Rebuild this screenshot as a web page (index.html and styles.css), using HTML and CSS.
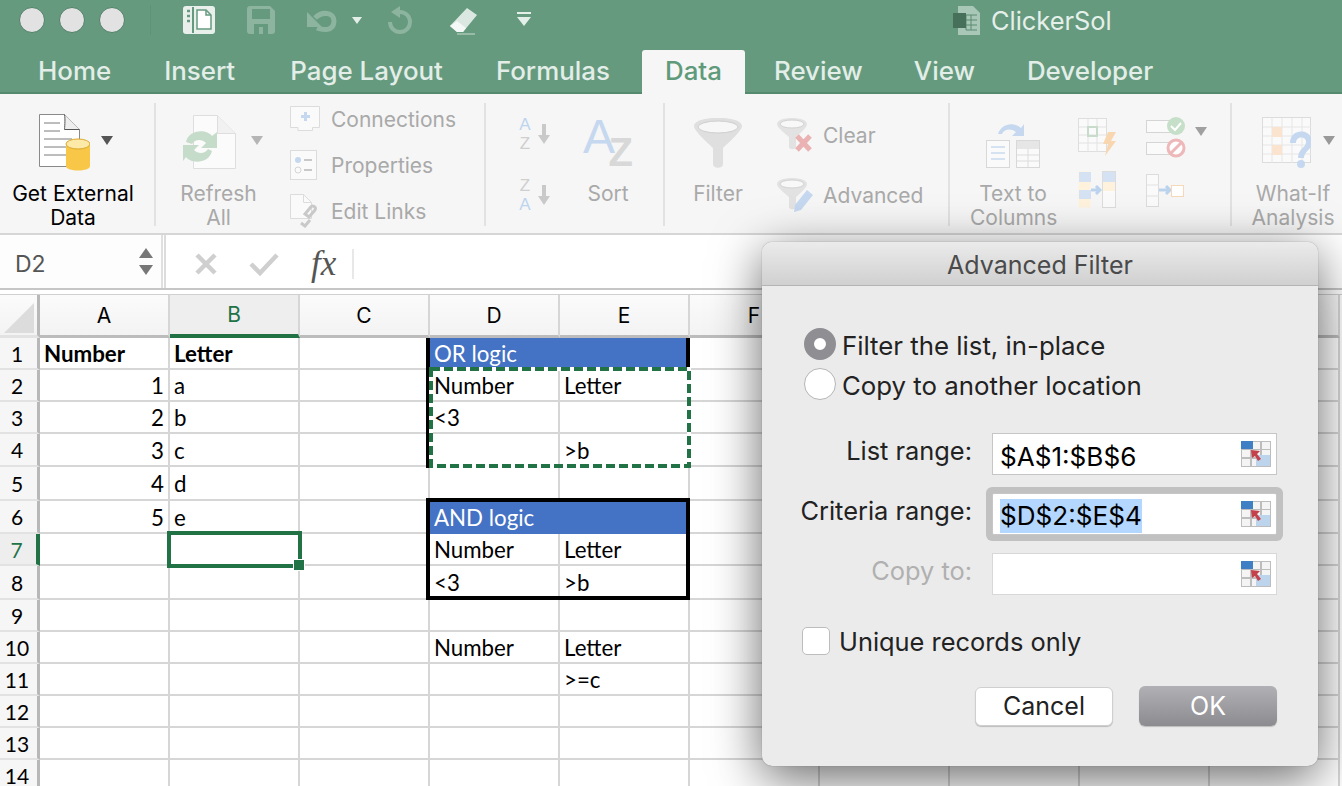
FILE: index.html
```html
<!DOCTYPE html>
<html lang="en">
<head>
    <meta charset="UTF-8">
    <title>ClickerSol</title>
    <link rel="stylesheet" href="styles.css">
</head>
<body>
    <div class="titlebar">
        <div class="lights"><span></span><span></span><span></span></div>
        <div class="qat-sep"></div>
        <svg class="qat q-side" width="32" height="28" viewBox="0 0 32 28"><rect width="32" height="28" rx="3" fill="#e9f0ec"/><path d="M10 1v26" stroke="#659a7e" stroke-width="2"/><path d="M4 5h3M4 10h3M4 15h3" stroke="#659a7e" stroke-width="2.5"/><path d="M14 4h9l5 5v14H14z" fill="#fff" stroke="#659a7e" stroke-width="1.5"/><path d="M23 4v5h5" fill="none" stroke="#659a7e" stroke-width="1.5"/></svg>
        <svg class="qat q-save" width="28" height="28" viewBox="0 0 28 28"><path d="M3 0h20l5 5v20a3 3 0 0 1-3 3H3a3 3 0 0 1-3-3V3a3 3 0 0 1 3-3z" fill="#8db49f"/><rect x="5" y="3" width="18" height="10" fill="#659a7e"/><rect x="7" y="18" width="14" height="10" fill="#659a7e"/><rect x="12" y="21" width="4" height="7" fill="#8db49f"/></svg>
        <svg class="qat q-undo" width="30" height="24" viewBox="0 0 30 24"><path d="M10 19 C15 21 27 23 27 12 C27 3 15 2 8 9" fill="none" stroke="#8db49f" stroke-width="5"/><path d="M0 3v15h15z" fill="#8db49f"/></svg>
        <svg class="qat q-caret" width="10" height="7" viewBox="0 0 10 7"><path d="M0 0h10L5 7z" fill="#e4efe9"/></svg>
        <svg class="qat q-redo" width="25" height="28" viewBox="0 0 25 28"><path d="M13 6a10 10 0 1 1-10 10" fill="none" stroke="#8db49f" stroke-width="4"/><path d="M13 0l-9 6 9 6z" fill="#8db49f"/></svg>
        <svg class="qat q-eraser" width="28" height="28" viewBox="0 0 28 28"><path d="M18 1l10 7-14 17H8L1 19z" fill="#dbe8e1"/><path d="M1 19l7 6h6l3-4-9-7z" fill="#f4f8f6"/><path d="M8 27h18" stroke="#a9c6b6" stroke-width="1.5"/></svg>
        <svg class="qat q-more" width="16" height="14" viewBox="0 0 16 14"><path d="M1 1h14" stroke="#e4efe9" stroke-width="2"/><path d="M1 5h14L8 14z" fill="#e4efe9"/></svg>
        <div class="doc-title">
            <svg width="27" height="29" viewBox="0 0 27 29"><path d="M5 0h15l7 7v22H5z" fill="#a9c7b7"/><path d="M13 9h11M13 14h11M13 19h11M13 24h11M13 9v15M18 9v15" stroke="#5b8a71" stroke-width="1"/><rect y="7" width="13" height="15" fill="#47705b"/></svg>
            <span>ClickerSol</span>
        </div>
    </div>
    <div class="tabs">
        <div class="tab">Home</div>
        <div class="tab">Insert</div>
        <div class="tab">Page Layout</div>
        <div class="tab">Formulas</div>
        <div class="tab active">Data</div>
        <div class="tab">Review</div>
        <div class="tab">View</div>
        <div class="tab">Developer</div>
    </div>

    <div class="ribbon">
        <div class="group g-external">
            <div class="big on b-external">
                <div class="big-icon">
                    <svg width="51" height="57" viewBox="0 0 51 57"><path d="M.5.5h25l15 15v37H.5z" fill="#fff" stroke="#8a8a8a"/><path d="M25.5.5c1 5 0 14 0 15h15" fill="#eee" stroke="#555"/><path d="M5 9h16M5 17h16M5 25h28M5 33h28M5 41h24" stroke="#bdbdbd" stroke-width="2"/><path d="M27 30h24v22c0 6-24 6-24 0z" fill="#f8c748"/><ellipse cx="39" cy="30" rx="12" ry="5" fill="#fde9a8" stroke="#dca92e"/></svg>
                    <i class="caret"></i>
                </div>
                <div class="label">Get External<br>Data</div>
            </div>
        </div>
        <div class="group g-connect">
            <div class="big b-refresh">
                <div class="big-icon">
                    <svg width="53" height="55" viewBox="0 0 53 55"><path d="M10.500.5h24l18 18v35h-42z" fill="#fbfbfb" stroke="#dedede"/><path d="M34.500.5v18h18" fill="#f1f1f1" stroke="#dedede"/><path d="M3 27c3-13 21-13 26-6l5-4v16H18l5-5c-4-4-11-4-14 1z" fill="#c6dccb"/><path d="M29 36c-3 13-21 13-26 6l-3 4V30h16l-5 5c4 4 11 4 14-1z" fill="#c6dccb"/></svg>
                    <i class="caret"></i>
                </div>
                <div class="label">Refresh<br>All</div>
            </div>
            <div class="mini-col">
                <div class="mini">
                    <span class="mini-icon"><svg width="30" height="26" viewBox="0 0 30 26"><path d="M.5.500h29v21h-7v3H8v-3H.5z" fill="#fafafa" stroke="#dcdcdc"/><path d="M11 9h3V6h3v3h3v3h-3v3h-3v-3h-3z" fill="#c5d8ef"/></svg></span>Connections
                </div>
                <div class="mini">
                    <span class="mini-icon"><svg width="27" height="30" viewBox="0 0 27 30"><rect x=".5" y=".5" width="26" height="29" fill="#fafafa" stroke="#dcdcdc"/><circle cx="8" cy="10" r="3" fill="#c5d8ef"/><circle cx="8" cy="20" r="3" fill="none" stroke="#d5d5d5"/><path d="M14 10h8M14 20h8" stroke="#c8c8c8" stroke-width="2"/></svg></span>Properties
                </div>
                <div class="mini">
                    <span class="mini-icon"><svg width="31" height="34" viewBox="0 0 31 34"><path d="M.5.5h13l8 8v16H.5z" fill="#fafafa" stroke="#dcdcdc"/><path d="M13.500.5v8h8" fill="none" stroke="#dcdcdc"/><path d="M11 29l4 3 5-6M20 14l-5 6 4 3 6-7c2-3-3-6-5-2z" fill="none" stroke="#c9c9c9" stroke-width="3"/></svg></span>Edit Links
                </div>
            </div>
        </div>
        <div class="group g-sort">
            <div class="sort-col">
                <div class="sort-mini"><span class="az"><em class="blue">A</em><em>Z</em></span><svg width="12" height="20" viewBox="0 0 12 20"><path d="M4 0h4v11h4l-6 9-6-9h4z" fill="#c9c9c9"/></svg></div>
                <div class="sort-mini"><span class="az"><em>Z</em><em class="blue">A</em></span><svg width="12" height="20" viewBox="0 0 12 20"><path d="M4 0h4v11h4l-6 9-6-9h4z" fill="#c9c9c9"/></svg></div>
            </div>
            <div class="big b-sort">
                <div class="big-icon"><span class="big-az"><b>A</b><b>Z</b></span></div>
                <div class="label">Sort</div>
            </div>
        </div>
        <div class="group g-filter">
            <div class="big b-filter">
                <div class="big-icon">
                    <svg width="48" height="50" viewBox="0 0 48 50"><path d="M0 8c0-11 48-11 48 0 0 5-14 17-19 22v16c0 5-10 5-10 0V30C14 25 0 13 0 8z" fill="#dfdfdf"/><ellipse cx="24" cy="9" rx="20" ry="6" fill="#f7f7f7" stroke="#cfcfcf"/></svg>
                </div>
                <div class="label">Filter</div>
            </div>
            <div class="mini-col tall">
                <div class="mini">
                    <span class="mini-icon"><svg width="36" height="34" viewBox="0 0 36 34"><path d="M0 6c0-8 30-8 30 0 0 4-9 11-11 13v10c0 3-7 3-7 0V19C10 17 0 10 0 6z" fill="#e2e2e2"/><ellipse cx="15" cy="6" rx="12" ry="4" fill="#f8f8f8" stroke="#d2d2d2"/><path d="M20 18l13 14M33 18L20 32" stroke="#eab2b2" stroke-width="5"/></svg></span>Clear
                </div>
                <div class="mini">
                    <span class="mini-icon"><svg width="36" height="34" viewBox="0 0 36 34"><path d="M0 6c0-8 30-8 30 0 0 4-9 11-11 13v10c0 3-7 3-7 0V19C10 17 0 10 0 6z" fill="#e2e2e2"/><ellipse cx="15" cy="6" rx="12" ry="4" fill="#f8f8f8" stroke="#d2d2d2"/><path d="M30 12l6 5-12 15-7 2 1-7z" fill="#c5d8ef"/></svg></span>Advanced
                </div>
            </div>
        </div>
        <div class="group g-tools">
            <div class="big b-text">
                <div class="big-icon">
                    <svg width="55" height="50" viewBox="0 0 55 50"><path d="M12 16c3-10 15-13 23-6l3-4v12H26l4-4c-5-4-12-3-14 2z" fill="#c5d8ef"/><rect x=".5" y="22.500" width="23" height="27" fill="#fafafa" stroke="#d8d8d8"/><path d="M5 29h14M5 35h14M5 41h14" stroke="#d5e2f2" stroke-width="2"/><rect x="30.500" y="22.500" width="23" height="27" fill="#fafafa" stroke="#d8d8d8"/><rect x="31" y="23" width="22" height="8" fill="#e6e6e6"/><path d="M42 31v18M31 37h22M31 43h22" stroke="#dcdcdc"/></svg>
                </div>
                <div class="label">Text to<br>Columns</div>
            </div>
            <div class="tool-grid">
                <svg width="39" height="38" viewBox="0 0 39 38"><rect x=".5" y=".5" width="28" height="33" fill="#fafafa" stroke="#dedede"/><path d="M10 1v33M19 1v33M1 9h28M1 17h28M1 25h28" stroke="#e2e2e2"/><rect x="10" y="9" width="9" height="9" fill="none" stroke="#c8dccb" stroke-width="2"/><path d="M30 14h8l-5 9h5L27 38l3-12h-5z" fill="#f8d7b0"/></svg>
                <div class="tool-caret">
                    <svg width="40" height="42" viewBox="0 0 40 42"><rect x=".5" y="4.500" width="30" height="12" fill="#fafafa" stroke="#d5d5d5"/><rect x=".5" y="26.500" width="30" height="12" fill="#fafafa" stroke="#d5d5d5"/><circle cx="30" cy="10" r="9" fill="#c6dfc9"/><path d="M25 10l4 4 6-7" fill="none" stroke="#fff" stroke-width="2"/><circle cx="30" cy="32" r="8" fill="#fff" stroke="#eeb8b8" stroke-width="3"/><path d="M25 37l10-10" stroke="#eeb8b8" stroke-width="3"/></svg>
                    <i class="caret"></i>
                </div>
                <svg width="38" height="38" viewBox="0 0 38 38"><rect x=".5" y=".5" width="12" height="36" fill="#fff2dc"/><rect x="1" y="1" width="12" height="10" fill="#d4e2f3"/><rect x="1" y="19" width="12" height="9" fill="#d4e2f3"/><rect x="24.500" y=".5" width="13" height="36" fill="#fafafa" stroke="#dcdcdc"/><rect x="25" y="1" width="12" height="10" fill="#d4e2f3"/><rect x="25" y="11" width="12" height="9" fill="#fff2dc"/><path d="M13 19h8M18 15l4 4-4 4" fill="none" stroke="#bcd3ee" stroke-width="3"/></svg>
                <svg width="38" height="33" viewBox="0 0 38 33"><rect x=".5" y=".5" width="12" height="32" fill="#fafafa" stroke="#dcdcdc"/><path d="M1 11h12M1 22h12" stroke="#e2e2e2"/><path d="M13 16h10M20 12l4 4-4 4" fill="none" stroke="#bcd3ee" stroke-width="3"/><rect x="25.500" y="11.500" width="12" height="11" fill="#fff" stroke="#f6d9b8"/></svg>
            </div>
        </div>
        <div class="group g-whatif">
            <div class="big b-whatif">
                <div class="big-icon">
                    <svg width="49" height="52" viewBox="0 0 49 52"><rect x=".5" y=".5" width="48" height="45" fill="#fafafa" stroke="#dcdcdc"/><path d="M10 1v45M20 1v45M30 1v45M40 1v45M1 10h48M1 19h48M1 28h48M1 37h48" stroke="#e6e6e6"/><rect x="10" y="10" width="10" height="10" fill="#fae3cf"/><rect x="10" y="28" width="10" height="10" fill="#fae3cf"/><path d="M28 26c0-15 22-15 22-1 0 8-8 9-8 16h-6c0-10 8-10 8-16 0-6-10-6-10 1z" fill="#c5d8ef"/><circle cx="39" cy="47" r="4" fill="#c5d8ef"/></svg>
                    <i class="caret"></i>
                </div>
                <div class="label">What-If<br>Analysis</div>
            </div>
        </div>
    </div>

    <div class="formula-bar">
        <div class="name-box">
            <span>D2</span>
            <div class="stepper"><i class="up"></i><i class="down"></i></div>
        </div>
        <div class="formula-btns">
            <svg width="24" height="24" viewBox="0 0 24 24"><path d="M3 3l18 18M21 3L3 21" stroke="#cfcfcf" stroke-width="4.500"/></svg>
            <svg width="30" height="24" viewBox="0 0 30 24"><path d="M2 12l9 9L28 3" fill="none" stroke="#cfcfcf" stroke-width="4.500"/></svg>
            <span class="fx">fx</span>
            <div class="fx-sep"></div>
        </div>
    </div>

    <div class="sheet">
        <table class="grid">
            <colgroup><col class="c-head"><col><col><col><col><col><col><col><col><col><col></colgroup>
            <tr class="heads"><th class="corner"><svg width="30" height="30" viewBox="0 0 30 30"><path d="M30 0v30H0z" fill="#dcdcdc"/></svg></th><th>A</th><th class="sel-col">B</th><th>C</th><th>D</th><th>E</th><th>F</th><th>G</th><th>H</th><th>I</th><th>J</th></tr>
            <tr><th>1</th><td class="bold">Number</td><td class="bold">Letter</td><td></td><td colspan="2" class="blue-head">OR logic</td><td></td><td></td><td></td><td></td><td></td></tr>
            <tr><th>2</th><td class="num">1</td><td>a</td><td></td><td>Number</td><td>Letter</td><td></td><td></td><td></td><td></td><td></td></tr>
            <tr><th>3</th><td class="num">2</td><td>b</td><td></td><td>&lt;3</td><td></td><td></td><td></td><td></td><td></td><td></td></tr>
            <tr class="r33"><th>4</th><td class="num">3</td><td>c</td><td></td><td></td><td>&gt;b</td><td></td><td></td><td></td><td></td><td></td></tr>
            <tr class="r34"><th>5</th><td class="num">4</td><td>d</td><td></td><td></td><td></td><td></td><td></td><td></td><td></td><td></td></tr>
            <tr class="r33"><th>6</th><td class="num">5</td><td>e</td><td></td><td colspan="2" class="blue-head">AND logic</td><td></td><td></td><td></td><td></td><td></td></tr>
            <tr><th class="sel-row">7</th><td></td><td></td><td></td><td>Number</td><td>Letter</td><td></td><td></td><td></td><td></td><td></td></tr>
            <tr class="r34"><th>8</th><td></td><td></td><td></td><td>&lt;3</td><td>&gt;b</td><td></td><td></td><td></td><td></td><td></td></tr>
            <tr><th>9</th><td></td><td></td><td></td><td></td><td></td><td></td><td></td><td></td><td></td><td></td></tr>
            <tr><th>10</th><td></td><td></td><td></td><td>Number</td><td>Letter</td><td></td><td></td><td></td><td></td><td></td></tr>
            <tr><th>11</th><td></td><td></td><td></td><td></td><td>&gt;=c</td><td></td><td></td><td></td><td></td><td></td></tr>
            <tr><th>12</th><td></td><td></td><td></td><td></td><td></td><td></td><td></td><td></td><td></td><td></td></tr>
            <tr><th>13</th><td></td><td></td><td></td><td></td><td></td><td></td><td></td><td></td><td></td><td></td></tr>
            <tr><th>14</th><td></td><td></td><td></td><td></td><td></td><td></td><td></td><td></td><td></td><td></td></tr>
        </table>
        <div class="or-left"></div>
        <div class="or-right"></div>
        <svg class="marquee" width="262" height="102" viewBox="0 0 262 102"><rect x="2" y="2" width="258" height="97" fill="none" stroke="#fff" stroke-width="4"/><rect x="2" y="2" width="258" height="97" fill="none" stroke="#217346" stroke-width="4" stroke-dasharray="9 4"/></svg>
        <div class="and-box"></div>
        <div class="cell-cursor"><span class="handle"></span></div>
    </div>

    <div class="dialog">
        <div class="dialog-title">Advanced Filter</div>
        <div class="dialog-body">
            <div class="radio-row"><span class="radio checked"></span>Filter the list, in-place</div>
            <div class="radio-row"><span class="radio"></span>Copy to another location</div>

            <div class="ranges">
                <div class="range-row">
                    <label>List range:</label>
                    <div class="range-input"><span>$A$1:$B$6</span>
                        <svg width="30" height="26" viewBox="0 0 30 26"><rect width="30" height="26" fill="#bdbdbd"/><path d="M1 9h8v7H1zM1 18h8v7H1zM11 1h8v7h-8zM21 1h8v7h-8zM11 9h8v7h-8zM21 9h8v7h-8zM11 18h8v7h-8z" fill="#f4f4f4"/><path d="M15 14h14v11H15z" fill="#bcd4ec"/><rect width="12" height="8" fill="#3f7fc4"/><path d="M10 9l9 1-3 3 4 5-3 2-3-5-3 2z" fill="#c4404a"/></svg>
                    </div>
                </div>
                <div class="range-row">
                    <label>Criteria range:</label>
                    <div class="range-input focus"><span class="picked">$D$2:$E$4</span>
                        <svg width="30" height="26" viewBox="0 0 30 26"><rect width="30" height="26" fill="#bdbdbd"/><path d="M1 9h8v7H1zM1 18h8v7H1zM11 1h8v7h-8zM21 1h8v7h-8zM11 9h8v7h-8zM21 9h8v7h-8zM11 18h8v7h-8z" fill="#f4f4f4"/><path d="M15 14h14v11H15z" fill="#bcd4ec"/><rect width="12" height="8" fill="#3f7fc4"/><path d="M10 9l9 1-3 3 4 5-3 2-3-5-3 2z" fill="#c4404a"/></svg>
                    </div>
                </div>
                <div class="range-row off">
                    <label>Copy to:</label>
                    <div class="range-input">
                        <svg width="30" height="26" viewBox="0 0 30 26"><rect width="30" height="26" fill="#bdbdbd"/><path d="M1 9h8v7H1zM1 18h8v7H1zM11 1h8v7h-8zM21 1h8v7h-8zM11 9h8v7h-8zM21 9h8v7h-8zM11 18h8v7h-8z" fill="#f4f4f4"/><path d="M15 14h14v11H15z" fill="#bcd4ec"/><rect width="12" height="8" fill="#3f7fc4"/><path d="M10 9l9 1-3 3 4 5-3 2-3-5-3 2z" fill="#c4404a"/></svg>
                    </div>
                </div>
            </div>

            <div class="check-row"><span class="check"></span>Unique records only</div>

            <div class="dialog-btns">
                <button class="btn">Cancel</button>
                <button class="btn ok">OK</button>
            </div>
        </div>
    </div>
</body>
</html>
```

FILE: styles.css
```css
html, body {
    margin: 0;
    height: 786px;
    overflow: hidden;
    background: #fff;
    font-family: Inter, "Liberation Sans", sans-serif;
}

/* title bar and tabs */
.titlebar {
    height: 50px;
    display: flex;
    align-items: flex-start;
    background: #659a7e;
    color: #e6f0ea;
}
.lights {
    display: flex;
    gap: 14px;
    padding: 7px 0 0 19px;
}
.lights span {
    width: 24px;
    height: 24px;
    border: 1px solid #507f67;
    border-radius: 50%;
    background: #e2e2e2;
}
.qat-sep {
    width: 1px;
    height: 30px;
    margin: 5px 0 0 25px;
    background: #5f9277;
}
.qat { flex: none; }
.q-side { margin: 6px 0 0 32px; }
.q-save { margin: 6px 0 0 32px; }
.q-undo { margin: 9px 0 0 32px; }
.q-caret { margin: 17px 0 0 15px; }
.q-redo { margin: 6px 0 0 25px; }
.q-eraser { margin: 7px 0 0 37px; }
.q-more { margin: 12px 0 0 39px; }
.doc-title {
    display: flex;
    align-items: center;
    gap: 11px;
    margin: 5px 0 0 421px;
    font-size: 25.400px;
    line-height: 30px;
}
.doc-title span { padding-top: 1px; }
.tabs {
    height: 44px;
    box-sizing: border-box;
    display: flex;
    gap: 7px;
    padding-left: 15px;
    background: #659a7e;
    border-bottom: 2px solid #558a6e;
}
.tab {
    height: 44px;
    padding: 0 23px;
    font-size: 25.900px;
    line-height: 42px;
    font-weight: 500;
    color: #e3eee8;
}
.tab:nth-child(3), .tab:nth-child(5) { margin-left: 2px; }
.tab:nth-child(6), .tab:nth-child(8) { margin-left: -1px; }
.tab:nth-child(7) { margin-left: -2px; }
.tab.active {
    background: #f6f6f6;
    border-radius: 3px 3px 0 0;
    color: #5f9a7b;
}

/* ribbon */
.ribbon {
    height: 141px;
    box-sizing: border-box;
    display: flex;
    background: #f6f6f6;
    color: #a9a9a9;
    font-size: 21px;
    border-bottom: 2px solid #d6d6d6;
}
.group {
    display: flex;
    box-sizing: border-box;
    height: 123px;
    margin-top: 9px;
    border-right: 2px solid #e2e2e2;
    flex: none;
}
.g-external { width: 156px; }
.g-connect { width: 330px; }
.g-sort { width: 179px; }
.g-filter { width: 285px; }
.g-tools { width: 282px; }
.g-whatif { border-right: none; }
.big {
    display: flex;
    flex-direction: column;
    flex: none;
}
.big-icon {
    height: 79px;
    flex: none;
    display: flex;
    align-items: center;
}
.label {
    text-align: center;
    line-height: 24px;
    white-space: nowrap;
}
.on .label { color: #000; }
.caret {
    width: 0;
    height: 0;
    margin-bottom: 4px;
    border-left: 6px solid transparent;
    border-right: 6px solid transparent;
    border-top: 9px solid #777;
}
.on .caret { border-top-color: #555; }
.b-external { width: 124px; margin-left: 11px; }
.b-external .big-icon { padding-left: 28px; gap: 11px; }
.b-refresh { width: 107px; margin-left: 9px; }
.b-refresh .big-icon { padding-left: 18px; gap: 15px; }
.b-refresh .caret { border-top-color: #b5b5b5; }
.mini-col {
    display: flex;
    flex-direction: column;
    margin: -7px 0 0 18px;
}
.mini {
    height: 46px;
    flex: none;
    display: flex;
    align-items: center;
}
.mini-icon {
    width: 41px;
    display: flex;
    align-items: center;
    flex: none;
}
.mini-col.tall { margin: 2px 0 0 31px; }
.tall .mini { height: 60px; }
.tall .mini-icon { width: 46px; }

.sort-col {
    display: flex;
    flex-direction: column;
    gap: 25px;
    padding: 13px 0 0 32px;
}
.sort-mini {
    display: flex;
    align-items: center;
    gap: 6px;
    height: 36px;
}
.az {
    display: flex;
    flex-direction: column;
    width: 14px;
    font-family: "Liberation Sans", sans-serif;
    font-size: 17px;
    line-height: 19.500px;
    color: #cfcfcf;
    text-align: center;
}
.az em { font-style: normal; }
.az .blue { color: #bdd4ef; }
.b-sort { width: 70px; margin-left: 23px; }
.b-sort .big-icon { padding-left: 10px; }
.big-az {
    display: block;
    position: relative;
    width: 50px;
    height: 52px;
    font-family: "Liberation Sans", sans-serif;
}
.big-az b {
    position: absolute;
    font-weight: 400;
    line-height: 1;
}
.big-az b:first-child {
    left: 0;
    top: -4px;
    font-size: 48px;
    color: #c5d8ef;
}
.big-az b:last-child {
    right: 0;
    bottom: -3px;
    font-size: 40px;
    font-weight: 700;
    color: #d8d8d8;
}
.b-filter { width: 56px; margin-left: 25px; }
.b-filter .big-icon { padding-left: 4px; }
.b-text { width: 86px; margin-left: 20px; }
.b-text .big-icon { padding-left: 16px; }
.tool-grid {
    display: grid;
    grid-template-columns: 68px 70px;
    grid-template-rows: 57px 50px;
    align-items: center;
    margin: 5px 0 0 22px;
}
.tool-caret {
    display: flex;
    align-items: center;
    gap: 9px;
}
.tool-caret .caret { border-top-color: #a0a0a0; margin-bottom: 10px; }
.b-whatif { width: 84px; margin-left: 19px; }
.b-whatif .big-icon { padding-left: 11px; gap: 12px; }
.b-whatif .caret { border-top-color: #999; }

/* formula bar */
.formula-bar {
    height: 53px;
    display: flex;
    background: #fff;
    border-bottom: 2px solid #c6c6c6;
}
.name-box {
    width: 163px;
    box-sizing: border-box;
    display: flex;
    align-items: center;
    justify-content: space-between;
    padding: 5px 8px 0 15px;
    font-size: 23px;
    color: #555;
    background: #fdfdfd;
    border-right: 2px solid #e0e0e0;
    margin-right: 1px;
}
.stepper {
    display: flex;
    flex-direction: column;
    gap: 7px;
    margin-top: -5px;
}
.stepper i {
    width: 0;
    height: 0;
    border-left: 7px solid transparent;
    border-right: 7px solid transparent;
}
.stepper .up { border-bottom: 10px solid #777; }
.stepper .down { border-top: 10px solid #777; }
.formula-btns {
    display: flex;
    align-items: center;
    padding: 5px 0 0 28px;
    border-left: 2px solid #dcdcdc;
}
.formula-btns svg:nth-child(2) { margin-left: 31px; }
.fx {
    margin-left: 32px;
    font-family: "Liberation Serif", serif;
    font-style: italic;
    font-size: 35px;
    line-height: 40px;
    color: #555;
}
.fx-sep {
    width: 2px;
    height: 30px;
    margin-left: 16px;
    background: #e8e8e8;
}

/* sheet */
.sheet {
    position: relative;
    margin-top: 4px;
    border-top: 1px solid #d0d0d0;
}
.grid {
    width: 1340px;
    table-layout: fixed;
    border-collapse: separate;
    border-spacing: 0;
    font-family: Lato, "Noto Sans", sans-serif;
    font-size: 22.300px;
    color: #000;
}
.c-head { width: 40px; }
.grid td, .grid th {
    height: 32px;
    box-sizing: border-box;
    padding: 1px 5px 0 4px;
    border-right: 2px solid #d6d6d6;
    border-bottom: 2px solid #d6d6d6;
    font-weight: 400;
    white-space: nowrap;
    overflow: hidden;
}
.grid tr.r33 td, .grid tr.r33 th { height: 33px; }
.grid tr.r34 td, .grid tr.r34 th { height: 34px; }
.grid th {
    padding: 0;
    background: #f6f6f6;
    font-size: 21px;
    text-align: center;
}
.grid tr > th:first-child {
    border-right: 3px solid #b8b8b8;
    border-bottom-color: #e2e2e2;
    padding-right: 3px;
}
.grid .heads th {
    height: 43px;
    background: linear-gradient(#fbfbfb, #f3f3f3);
    border-bottom: 3px solid #bcbcbc;
    border-right-color: #d6d6d6;
    font-family: Inter, sans-serif;
    font-size: 21px;
}
.grid .heads .corner {
    padding: 0 0 0 0;
    border-right: 3px solid #b8b8b8;
}
.corner svg { display: block; margin: 6px 0 0 4px; }
.grid .heads .sel-col {
    background: #eeeeee;
    color: #217346;
    border-bottom: 4px solid #217346;
}
.grid tr > th.sel-row {
    background: #eeeeee;
    color: #217346;
    border-right: 4px solid #217346;
}
.grid td.bold { font-weight: 700; }
.grid td.num { text-align: right; padding-right: 4px; }
.grid td.blue-head {
    background: #4472c4;
    color: #fff;
    border-bottom-color: #4472c4;
}
.or-left {
    position: absolute;
    left: 426px;
    top: 43px;
    width: 4px;
    height: 130px;
    background: #000;
}
.or-right {
    position: absolute;
    left: 686px;
    top: 43px;
    width: 4px;
    height: 30px;
    background: #000;
}
.marquee {
    position: absolute;
    left: 429px;
    top: 72px;
}
.and-box {
    position: absolute;
    left: 426px;
    top: 203px;
    width: 256px;
    height: 94px;
    border: 4px solid #000;
}
.cell-cursor {
    position: absolute;
    left: 167px;
    top: 236px;
    width: 127px;
    height: 29px;
    border: 4px solid #217346;
}
.handle {
    position: absolute;
    right: -7px;
    bottom: -7px;
    width: 10px;
    height: 10px;
    background: #217346;
    border: 1px solid #fff;
}

/* dialog */
.dialog {
    position: absolute;
    left: 762px;
    top: 242px;
    width: 556px;
    height: 524px;
    border-radius: 10px;
    background: #ebebeb;
    box-shadow: 0 0 1px #666, 0 12px 50px rgba(0, 0, 0, 0.6);
    color: #222;
    font-size: 25.400px;
    overflow: hidden;
}
.dialog-title {
    height: 44px;
    box-sizing: border-box;
    background: linear-gradient(#ebebeb, #d0d0d0);
    border-bottom: 1px solid #b4b4b4;
    text-align: center;
    font-size: 25px;
    line-height: 46px;
    color: #4a4a4a;
}
.dialog-body {
    padding: 42px 41px 0 42px;
}
.radio-row {
    display: flex;
    align-items: flex-start;
    gap: 6px;
    height: 32px;
    font-size: 25.800px;
    line-height: 36px;
    margin-bottom: 8px;
}
.radio {
    box-sizing: border-box;
    width: 32px;
    height: 32px;
    border: 1px solid #b5b5b5;
    border-radius: 50%;
    background: #fff;
}
.radio.checked {
    border: 10px solid #8f8e93;
    background: #fff;
}
.ranges {
    display: flex;
    flex-direction: column;
    gap: 18px;
    margin: 33px 0 0 -42px;
}
.range-row {
    display: grid;
    grid-template-columns: 210px 285px;
    gap: 20px;
    align-items: center;
}
.range-row label {
    text-align: right;
    padding-bottom: 8px;
}
.range-input {
    box-sizing: border-box;
    height: 42px;
    display: flex;
    align-items: center;
    justify-content: space-between;
    padding: 4px 5px 0 7px;
    background: #fff;
    border: 1px solid #c6c6c6;
    font-size: 26.100px;
    color: #000;
}
.range-input svg { margin: -4px 0 0 auto; }
.range-input.focus { box-shadow: 0 0 0 6px #c1c1c1; border-radius: 2px; }
.picked {
    background: #b3d7ff;
    padding: 1px 0 2px 0;
}
.range-row.off label { color: #b0b0b0; }
.range-row.off .range-input { border-color: #d8d8d8; }
.check-row {
    display: flex;
    align-items: flex-start;
    gap: 9px;
    height: 28px;
    line-height: 30px;
    margin: 32px 0 0 -2px;
}
.check {
    box-sizing: border-box;
    width: 28px;
    height: 28px;
    border: 1px solid #bdbdbd;
    border-radius: 5px;
    background: #fff;
}
.dialog-btns {
    display: flex;
    justify-content: flex-end;
    align-items: center;
    gap: 26px;
    margin-top: 31px;
}
.btn {
    width: 138px;
    height: 39px;
    padding: 0;
    border: 1px solid #cfcfcf;
    border-radius: 6px;
    background: #fff;
    box-shadow: 0 1px 1px rgba(0, 0, 0, 0.2);
    font-family: inherit;
    font-size: 25px;
    color: #222;
}
.btn.ok {
    height: 40px;
    border: none;
    background: linear-gradient(#b1b0b4, #8c8b8f);
    color: #fff;
}
```
